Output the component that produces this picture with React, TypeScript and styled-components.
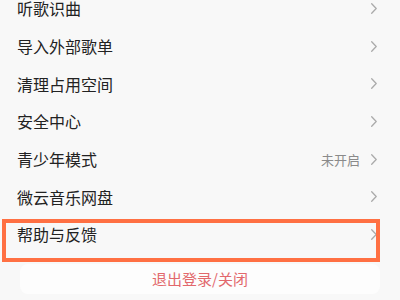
import styled, { createGlobalStyle } from 'styled-components';

const GlobalStyle = createGlobalStyle`
  html, body {
    margin: 0;
    padding: 0;
    background-color: #f8f8f8;
    overflow: hidden;
  }
  body {
    font-family: "Noto Sans CJK SC", "Noto Sans", sans-serif;
  }
`;

const Page = styled.div`
  position: relative;
  width: 400px;
  height: 300px;
  overflow: hidden;
`;

const List = styled.div`
  display: flex;
  flex-direction: column;
  margin-top: -10.5px;
`;

const Row = styled.div`
  display: flex;
  align-items: center;
  height: 37.7px;
  padding: 0 23px 0 17px;
`;

const Label = styled.span`
  flex: 1;
  font-size: 16px;
  color: #222222;
  line-height: 1;
`;

const Status = styled.span`
  font-size: 13px;
  color: #8a8a8a;
  margin-right: 11px;
  line-height: 1;
`;

const Highlight = styled.div`
  position: absolute;
  left: 2px;
  top: 219px;
  width: 378px;
  height: 43px;
  box-sizing: border-box;
  border: 4.5px solid #ff7043;
  pointer-events: none;
`;

const Footer = styled.div`
  display: flex;
  align-items: center;
  justify-content: center;
  height: 30px;
  margin: 10.5px 20px 0;
  background-color: #fdfdfd;
  border-radius: 8px;
`;

const Logout = styled.span`
  font-size: 15px;
  color: #e2686c;
  line-height: 1;
`;

function Chevron() {
  return (
    <svg width="6" height="11" viewBox="0 0 6 11">
      <polyline
        points="0.7,0.8 5.2,5.5 0.7,10.2"
        fill="none"
        stroke="#ababab"
        strokeWidth="1.3"
        strokeLinecap="round"
        strokeLinejoin="round"
      />
    </svg>
  );
}

const items: { label: string; status?: string }[] = [
  { label: '听歌识曲' },
  { label: '导入外部歌单' },
  { label: '清理占用空间' },
  { label: '安全中心' },
  { label: '青少年模式', status: '未开启' },
  { label: '微云音乐网盘' },
  { label: '帮助与反馈' },
];

function App() {
  return (
    <Page>
      <GlobalStyle />
      <List>
        {items.map((item) => (
          <Row key={item.label}>
            <Label>{item.label}</Label>
            {item.status && <Status>{item.status}</Status>}
            <Chevron />
          </Row>
        ))}
      </List>
      <Footer>
        <Logout>退出登录/关闭</Logout>
      </Footer>
      <Highlight />
    </Page>
  );
}

export default App;
